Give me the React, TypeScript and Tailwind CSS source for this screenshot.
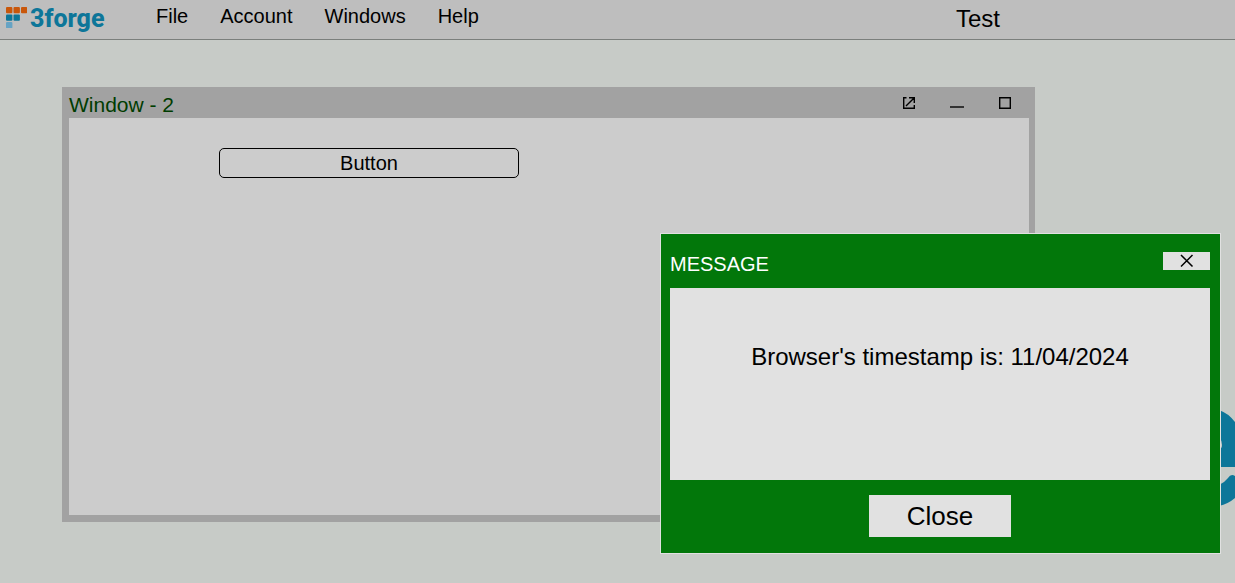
const squares = [
  [0, 0, '#c9570b'],
  [7.5, 0, '#c9570b'],
  [15, 0, '#c9570b'],
  [0, 7.5, '#0d7699'],
  [7.5, 7.5, '#0d7699'],
  [0, 15, '#66a3c4'],
] as const;

function Logo() {
  return (
    <a href="#" aria-label="3forge" className="flex w-[104px] shrink-0 items-start gap-[3px] pt-[7px] pl-[6px]">
      <svg width="21" height="21" viewBox="0 0 21 21" className="shrink-0" aria-hidden="true">
        {squares.map(([x, y, fill]) => (
          <rect key={`${x}-${y}`} x={x} y={y} width="6.4" height="6.2" rx="1" fill={fill} />
        ))}
      </svg>
      <span className="-mt-[3px] font-[Roboto,sans-serif] text-[25px] leading-[30px] font-extrabold text-[#0d7699]">3forge</span>
    </a>
  );
}

const menus = ['File', 'Account', 'Windows', 'Help'];

function MenuBar() {
  return (
    <header className="flex h-10 items-start border-b border-[#7b7f7c] bg-[#bebebe]">
      <Logo />
      <nav className="ml-[52px] flex gap-8 pt-1">
        {menus.map((m) => (
          <button key={m} type="button" className="text-[20px] leading-6">
            {m}
          </button>
        ))}
      </nav>
      <h1 className="mr-[235px] ml-auto pt-1 text-[24px] leading-[30px]">Test</h1>
    </header>
  );
}

function DesktopWindow() {
  return (
    <section className="absolute top-[47px] right-[200px] left-[62px] flex h-[435px] flex-col bg-[#a2a2a2] pr-[6px] pb-[7px] pl-[7px]">
      <div className="flex h-[31px] shrink-0 items-center">
        <h2 className="pt-1 text-[21px] leading-6 text-[#003c00]">Window - 2</h2>
        <div className="mr-[17px] ml-auto flex gap-[34px]">
          <button type="button" aria-label="Open in new window">
            <svg width="14" height="14" viewBox="0 0 14 14" fill="none" stroke="#000" strokeWidth="1.4">
              <path d="M4.5 1.7H1.7V12.3H12.3V9M7 1.7H12.3V7M12.3 1.7L4 10" />
            </svg>
          </button>
          <button type="button" aria-label="Minimize">
            <svg width="14" height="14" viewBox="0 0 14 14">
              <path d="M0 10h14v2H0z" fill="#333" />
            </svg>
          </button>
          <button type="button" aria-label="Maximize">
            <svg width="14" height="14" viewBox="0 0 14 14" fill="none" stroke="#000" strokeWidth="1.4">
              <path d="M1.7 1.7H12.3V12.3H1.7z" />
            </svg>
          </button>
        </div>
      </div>
      <div className="flex-1 bg-[#cccccc] pt-[30px] pl-[150px]">
        <button type="button" className="h-[30px] w-[300px] rounded-[5px] border border-black text-[20px] leading-7">
          Button
        </button>
      </div>
    </section>
  );
}

function MessageDialog() {
  return (
    <div
      role="dialog"
      aria-labelledby="message-title"
      className="absolute top-[193px] right-[14px] flex w-[561px] flex-col border border-[#e1e1e1] bg-[#02770a] pr-[10px] pb-4 pl-[9px]"
    >
      <div className="flex h-[54px] items-start justify-between">
        <h2 id="message-title" className="pt-[18px] text-[20px] leading-6 text-white">
          MESSAGE
        </h2>
        <button type="button" aria-label="Dismiss" className="mt-[18px] flex h-[18px] w-[47px] items-center justify-center bg-[#e1e1e1]">
          <svg width="14" height="14" viewBox="0 0 14 14" stroke="#000" strokeWidth="1.5">
            <path d="M1 1L12.5 12.5M12.5 1L1 12.5" />
          </svg>
        </button>
      </div>
      <div className="h-[192px] bg-[#e1e1e1] pt-[54px] text-center text-[24px] leading-[30px]">
        Browser's timestamp is: 11/04/2024
      </div>
      <button type="button" className="mt-[15px] h-[42px] w-[142px] self-center bg-[#e1e1e1] text-[26px] leading-[42px]">
        Close
      </button>
    </div>
  );
}

export default function App() {
  return (
    <div className="flex min-h-screen flex-col font-['Liberation_Sans',Arial,sans-serif] text-black">
      <MenuBar />
      <main className="relative flex-1 overflow-hidden bg-[#c7cbc7]">
        <svg width="16" height="100" viewBox="0 0 16 100" className="absolute top-[368px] right-0" aria-hidden="true">
          <path d="M0 2Q9 5 16 14V59H0V41Q3 41 3 37Q3 33 0 28Z" fill="#0d7699" />
          <path d="M0 77Q5 75 9 70Q12 65 16 68V90Q9 96 0 98Z" fill="#0d7699" />
        </svg>
        <DesktopWindow />
        <MessageDialog />
      </main>
    </div>
  );
}
